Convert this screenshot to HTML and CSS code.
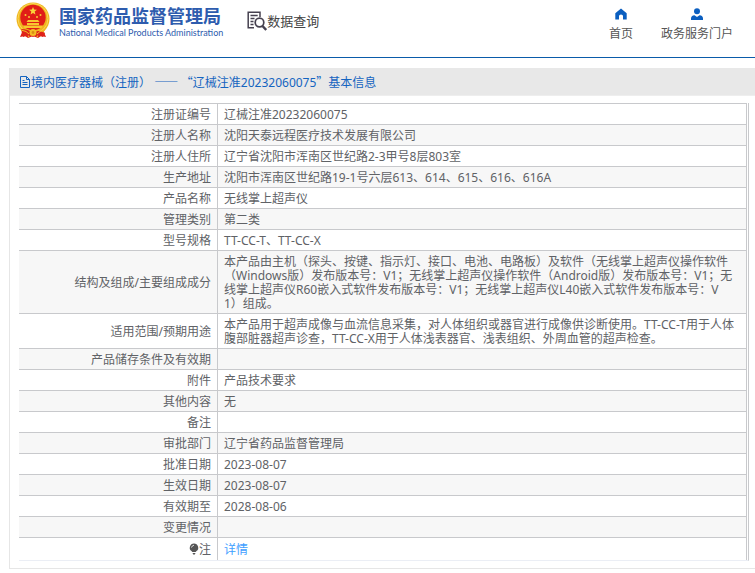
FILE: index.html
```html
<!DOCTYPE html>
<html lang="zh-CN">
<head>
<meta charset="utf-8">
<title>国家药品监督管理局 - 数据查询</title>
<link rel="stylesheet" href="styles.css">
</head>
<body>
<header class="site-header">
  <div class="brand">
    <svg class="emblem" viewBox="0 0 34 38" aria-hidden="true">
      <path d="M7 28 L4 35 L9 34 L12 36 L17 34 L22 36 L25 34 L30 35 L27 28Z" fill="#dc2118"/>
      <path d="M6 30 L10 34 M28 30 L24 34 M11 31 L13 35 M23 31 L21 35" stroke="#f4bd25" stroke-width="1.2"/>
      <circle cx="17" cy="17" r="16.5" fill="#efb51e"/>
      <circle cx="17" cy="16.5" r="15" fill="none" stroke="#fbd957" stroke-width="1"/>
      <circle cx="17" cy="15.5" r="12.7" fill="#e01d17"/>
      <path d="M17 5l1.1 2.6 2.8.2-2.2 1.8.7 2.8-2.4-1.5-2.4 1.5.7-2.8-2.2-1.8 2.8-.2z" fill="#fbd33a"/>
      <g fill="#f9c933"><circle cx="9.5" cy="13" r="1"/><circle cx="13" cy="15" r="1"/><circle cx="21" cy="15" r="1"/><circle cx="24.5" cy="13" r="1"/></g>
      <path d="M12 18h10l1.500 2h-13zM11 21h12v2H11zM7 23.500h20l-1.500 2.500h-17z" fill="#f8c72f"/>
      <path d="M5 27q7 0 12 4 5-4 12 0l-2 4q-6-3-10 0-4-3-10 0z" fill="#df2219"/>
      <circle cx="17" cy="30.500" r="3.500" fill="#f4bd25"/><circle cx="17" cy="30.500" r="1.400" fill="#d98d17"/>
      <path d="M5 28q6 1 8 4M29 28q-6 1-8 4" fill="none" stroke="#f4bd25"/>
    </svg>
    <div>
      <div class="brand-cn">国家药品监督管理局</div>
      <div class="brand-en">National Medical Products Administration</div>
    </div>
  </div>
  <div class="section-name">
    <svg class="search-icon" viewBox="0 0 20 20" fill="none" stroke="#45404f" aria-hidden="true">
      <path d="M7 16.800H1.200V1.200H13V6M3.500 4.500h7.200M3.500 7.500h4M3.500 10.500h3M3.500 13.500h3" stroke-width="1.500"/>
      <circle cx="12.500" cy="11.500" r="4.300" stroke-width="1.700"/>
      <path d="M15.500 15l3.700 4" stroke-width="2.400"/>
    </svg>
    <span>数据查询</span>
  </div>
  <nav class="site-nav">
    <a href="#">
      <svg viewBox="0 0 12 12" aria-hidden="true"><path d="M6 .5L.3 5.200V11.500H4V8q0-1.500 2-1.500T8 8v3.500h3.700V5.200z" fill="#0b5fc0"/></svg>
      <span>首页</span>
    </a>
    <a href="#">
      <svg viewBox="0 0 12 12" aria-hidden="true"><circle cx="6" cy="3.200" r="3" fill="#0b5fc0"/><path d="M0 12V10.500Q0 7.500 3.500 7.200L6 9l2.500-1.800Q12 7.500 12 10.500V12z" fill="#0b5fc0"/></svg>
      <span>政务服务门户</span>
    </a>
  </nav>
</header>

<main class="panel">
  <h1 class="panel-title">
    <svg viewBox="0 0 12 12" fill="none" stroke="#1464c0" aria-hidden="true"><path d="M1.500.5h6l3 3v8h-9zM7.500.5v3h3M3.500 4.500h2M3.500 6.500h5M3.500 8.500h5"/></svg>
    <span>境内医疗器械（注册） <span class="quote">—— “</span>辽械注准20232060075<span class="quote">”</span>基本信息</span>
  </h1>
  <div class="table-frame">
    <table class="details">
      <tbody>
        <tr><th scope="row">注册证编号</th><td>辽械注准20232060075</td></tr>
        <tr><th scope="row">注册人名称</th><td>沈阳天泰远程医疗技术发展有限公司</td></tr>
        <tr><th scope="row">注册人住所</th><td>辽宁省沈阳市浑南区世纪路2-3甲号8层803室</td></tr>
        <tr><th scope="row">生产地址</th><td>沈阳市浑南区世纪路19-1号六层613、614、615、616、616A</td></tr>
        <tr><th scope="row">产品名称</th><td>无线掌上超声仪</td></tr>
        <tr><th scope="row">管理类别</th><td>第二类</td></tr>
        <tr><th scope="row">型号规格</th><td>TT-CC-T、TT-CC-X</td></tr>
        <tr><th scope="row">结构及组成/主要组成成分</th><td>本产品由主机（探头、按键、指示灯、接口、电池、电路板）及软件（无线掌上超声仪操作软件（Windows版）发布版本号：V1；无线掌上超声仪操作软件（Android版）发布版本号：V1；无线掌上超声仪R60嵌入式软件发布版本号：V1；无线掌上超声仪L40嵌入式软件发布版本号：V1）组成。</td></tr>
        <tr><th scope="row">适用范围/预期用途</th><td>本产品用于超声成像与血流信息采集，对人体组织或器官进行成像供诊断使用。TT-CC-T用于人体腹部脏器超声诊查，TT-CC-X用于人体浅表器官、浅表组织、外周血管的超声检查。</td></tr>
        <tr><th scope="row">产品储存条件及有效期</th><td></td></tr>
        <tr><th scope="row">附件</th><td>产品技术要求</td></tr>
        <tr><th scope="row">其他内容</th><td>无</td></tr>
        <tr><th scope="row">备注</th><td></td></tr>
        <tr><th scope="row">审批部门</th><td>辽宁省药品监督管理局</td></tr>
        <tr><th scope="row">批准日期</th><td>2023-08-07</td></tr>
        <tr><th scope="row">生效日期</th><td>2023-08-07</td></tr>
        <tr><th scope="row">有效期至</th><td>2028-08-06</td></tr>
        <tr><th scope="row">变更情况</th><td></td></tr>
        <tr class="note"><th scope="row"><svg viewBox="0 0 10 12" aria-hidden="true"><path d="M5 .5a4.200 4.200 0 0 1 2.500 7.600L6.700 9H3.300L2.500 8.100A4.200 4.200 0 0 1 5 .5zM3.500 10h3L5.800 11.500H4.200z" fill="#555"/><path d="M2.500 4.500Q3 2.500 5 2.200" fill="none" stroke="#ddd"/></svg>注</th><td><a href="#">详情</a></td></tr>
      </tbody>
    </table>
  </div>
</main>
</body>
</html>
```

FILE: styles.css
```css
* {
  box-sizing: border-box;
}

body {
  margin: 0;
  background: #fff;
  color: #606266;
  font: 12px/14px "Noto Sans", "Noto Sans CJK SC", sans-serif;
}

a {
  color: #409eff;
  text-decoration: none;
}

.site-header {
  display: flex;
  align-items: flex-start;
  height: 58px;
  padding: 2px 22px 0 16px;
  border-bottom: 1px solid #0a5baa;
}

.brand {
  display: flex;
  gap: 9px;
  color: #2e5cae;
  white-space: nowrap;
}

.emblem {
  width: 34px;
  height: 38px;
}

.brand-cn {
  padding-top: 4px;
  font-size: 18px;
  font-weight: 700;
  line-height: 20px;
}

.brand-en {
  font: 9px/14px Lato, "Liberation Sans", sans-serif;
}

.section-name {
  display: flex;
  align-items: center;
  margin: 9px 0 0 24px;
  color: #444;
  font-size: 13px;
  line-height: 20px;
}

.search-icon {
  width: 20px;
  height: 20px;
}

.site-nav {
  display: flex;
  gap: 28px;
  margin-left: auto;
}

.site-nav a {
  display: flex;
  flex-direction: column;
  align-items: center;
  gap: 5px;
  padding-top: 6px;
  color: #555;
  line-height: 18px;
}

.site-nav svg {
  width: 12px;
  height: 12px;
}

.panel {
  margin: 10px 0 4px 9px;
  border: solid #e6e6e6;
  border-width: 0 0 1px 1px;
}

.panel-title {
  display: flex;
  align-items: center;
  height: 28px;
  margin: 0;
  padding: 1px 0 0 9px;
  border-bottom: 1px solid #eee;
  background: #e8e8e8;
  color: #1464c0;
  font-size: 12px;
  font-weight: 400;
}

.panel-title svg {
  width: 12px;
  height: 12px;
}

.quote {
  font-family: "Noto Sans CJK SC", sans-serif;
}

.table-frame {
  margin: 7px 6px 7px 9px;
  padding-right: 1px;
  border-right: 1px solid #c8c9cc;
  border-bottom: 1px solid #ebeef5;
}

.details {
  width: 100%;
  border-collapse: separate;
  border-spacing: 0;
  border-right: 1px solid #c8c9cc;
  table-layout: fixed;
  text-spacing-trim: space-all;
}

.details th,
.details td {
  padding: 4px 6px 2px;
  border-top: 1px solid #c8c9cc;
  height: 21px;
  word-break: break-all;
}

.details td {
  padding-right: 10px;
}

.details th {
  width: 199px;
  border-right: 1px solid #c8c9cc;
  font-weight: 400;
  text-align: right;
}

.details tr:nth-child(even) {
  background: #f7f7f7;
}

.details .note th,
.details .note td {
  padding-top: 5px;
  padding-bottom: 3px;
}

.details svg {
  width: 10px;
  height: 12px;
  vertical-align: -1px;
}
```
